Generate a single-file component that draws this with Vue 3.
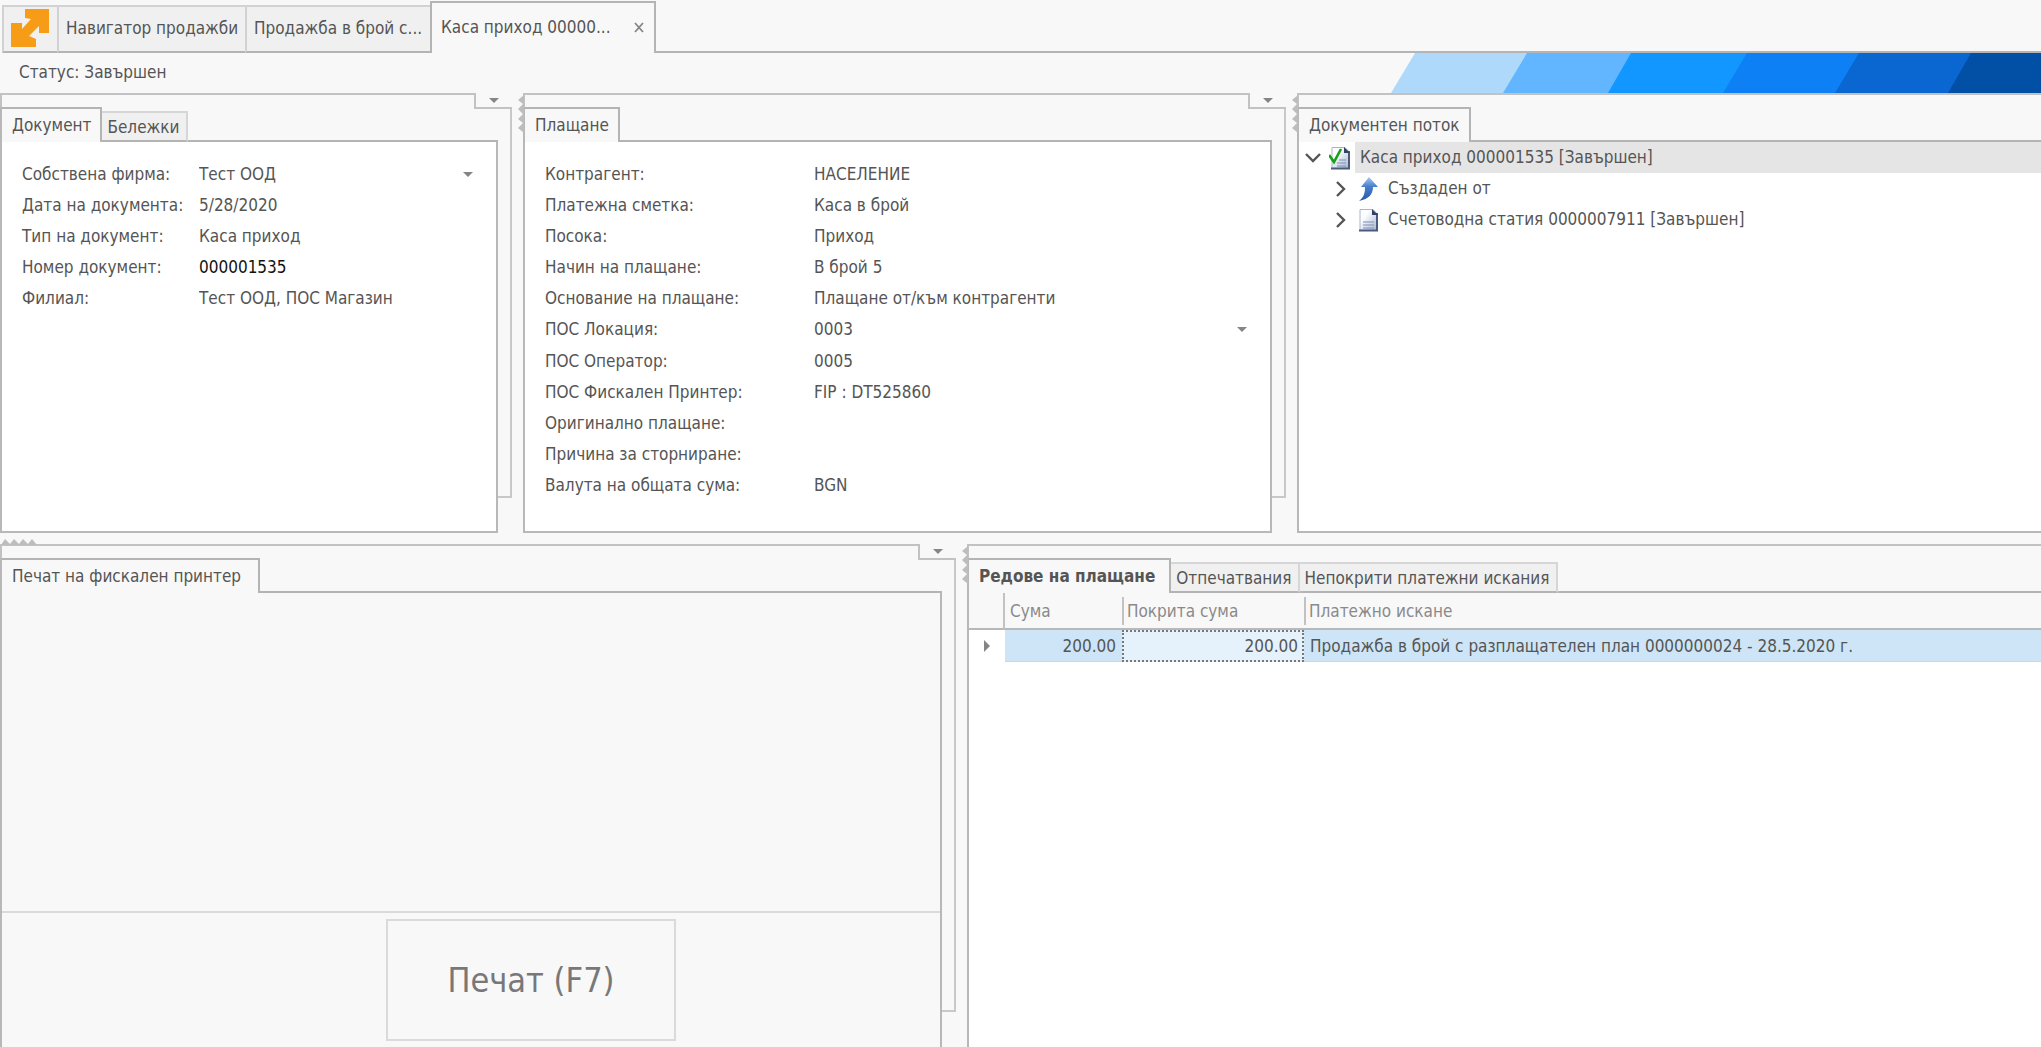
<script setup>
import { ref } from 'vue'

const openTabs = ['Навигатор продажби', 'Продажба в брой с...']

const documentFields = [
  { id: 'firm', label: 'Собствена фирма:', value: 'Тест ООД', select: true },
  { id: 'date', label: 'Дата на документа:', value: '5/28/2020' },
  { id: 'type', label: 'Тип на документ:', value: 'Каса приход' },
  { id: 'number', label: 'Номер документ:', value: '000001535', strong: true },
  { id: 'branch', label: 'Филиал:', value: 'Тест ООД, ПОС Магазин' },
]

const paymentFields = [
  { id: 'party', label: 'Контрагент:', value: 'НАСЕЛЕНИЕ' },
  { id: 'account', label: 'Платежна сметка:', value: 'Каса в брой' },
  { id: 'direction', label: 'Посока:', value: 'Приход' },
  { id: 'method', label: 'Начин на плащане:', value: 'В брой 5' },
  { id: 'reason', label: 'Основание на плащане:', value: 'Плащане от/към контрагенти' },
  { id: 'location', label: 'ПОС Локация:', value: '0003', select: true },
  { id: 'operator', label: 'ПОС Оператор:', value: '0005' },
  { id: 'printer', label: 'ПОС Фискален Принтер:', value: 'FIP : DT525860' },
  { id: 'original', label: 'Оригинално плащане:', value: '' },
  { id: 'storno', label: 'Причина за сторниране:', value: '' },
  { id: 'currency', label: 'Валута на общата сума:', value: 'BGN' },
]

const forms = [
  { key: 'doc', tabs: ['Документ', 'Бележки'], fields: documentFields },
  { key: 'pay', tabs: ['Плащане'], fields: paymentFields },
]

const rows = ref([
  {
    sum: '200.00',
    covered: '200.00',
    request: 'Продажба в брой с разплащателен план 0000000024 - 28.5.2020 г.',
  },
])
</script>

<template>
  <div class="app">
    <nav class="topbar" role="tablist">
      <button class="toptab toptab-logo" aria-label="Меню">
        <svg width="38" height="38" viewBox="0 0 38 38">
          <path fill="#f79c16" d="M14 0H38V24H28V17L18 27L25 30V38H0V14H11V20L20 10L14 9Z" />
        </svg>
      </button>
      <button
        v-for="(tab, i) in openTabs"
        :key="tab"
        class="toptab"
        :class="i === 0 ? 'toptab-first' : 'toptab-second'"
        role="tab"
      >{{ tab }}</button>
      <div class="toptab toptab-active">
        <button class="plain" role="tab" aria-selected="true">Каса приход 00000...</button>
        <button class="plain close" aria-label="Затвори">
          <svg width="10" height="11" viewBox="0 0 10 11">
            <path d="M1 1L9 10M9 1L1 10" stroke="#858585" stroke-width="1.8" fill="none" />
          </svg>
        </button>
      </div>
      <div class="topbar-rest"></div>
    </nav>

    <header class="status">
      <span class="status-text">Статус: Завършен</span>
      <svg class="banner" width="650" height="40" viewBox="0 0 650 40" aria-hidden="true">
        <path fill="#aed9fb" d="M24 0H650V40H0Z" />
        <path fill="#62b6ff" d="M136 0H650V40H112Z" />
        <path fill="#1296ff" d="M240 0H650V40H217Z" />
        <path fill="#0c80f4" d="M356 0H650V40H332Z" />
        <path fill="#0a66d0" d="M468 0H650V40H444Z" />
        <path fill="#024fa6" d="M580 0H650V40H557Z" />
      </svg>
    </header>

    <main class="work">
      <div class="row row-top">
        <section v-for="form in forms" :key="form.key" class="panel">
          <svg v-if="form.key === 'pay'" class="grip" width="6" height="38" viewBox="0 0 6 38">
            <path fill="#bdbdbd" d="M6 0V38L0 33L5 28L0 24L5 19L0 14L5 9L0 5Z" />
          </svg>
          <div class="cap">
            <div class="cap-line"></div>
            <button class="cap-notch" aria-label="Опции">
              <svg width="10" height="5" viewBox="0 0 10 5"><path fill="#858585" d="M0 0H10L5 5Z" /></svg>
            </button>
          </div>
          <div class="mid">
            <div class="content">
              <div class="tabs" role="tablist">
                <button
                  v-for="(tab, i) in form.tabs"
                  :key="tab"
                  class="tab"
                  :class="{ active: i === 0 }"
                  role="tab"
                >{{ tab }}</button>
                <div class="tabs-rest"></div>
              </div>
              <div class="body form" :class="'form-' + form.key">
                <div v-for="f in form.fields" :key="f.id" class="field">
                  <label :for="f.id">{{ f.label }}</label>
                  <div v-if="f.select" class="pick">
                    <select :id="f.id"><option>{{ f.value }}</option></select>
                    <svg class="pick-arrow" width="10" height="5" viewBox="0 0 10 5"><path fill="#858585" d="M0 0H10L5 5Z" /></svg>
                  </div>
                  <input v-else :id="f.id" type="text" readonly :value="f.value" :class="{ strong: f.strong }" />
                </div>
              </div>
            </div>
            <div class="rail"></div>
          </div>
        </section>

        <section class="panel panel-open">
          <svg class="grip" width="6" height="38" viewBox="0 0 6 38">
            <path fill="#bdbdbd" d="M6 0V38L0 33L5 28L0 24L5 19L0 14L5 9L0 5Z" />
          </svg>
          <div class="cap"><div class="cap-line"></div></div>
          <div class="mid">
            <div class="content">
              <div class="tabs" role="tablist">
                <button class="tab active" role="tab">Документен поток</button>
                <div class="tabs-rest"></div>
              </div>
              <ul class="body tree">
                <li class="node">
                  <button class="plain twist" aria-label="Свий">
                    <svg width="16" height="10" viewBox="0 0 16 10"><path d="M1 1L8 8L15 1" stroke="#555" stroke-width="2.4" fill="none" /></svg>
                  </button>
                  <svg class="icon" width="24" height="24" viewBox="0 0 24 24">
                    <defs>
                      <linearGradient id="page" x1="0" y1="0" x2="1" y2="1">
                        <stop offset="0.3" stop-color="#fdfdff" />
                        <stop offset="1" stop-color="#a3b4cf" />
                      </linearGradient>
                    </defs>
                    <path d="M3 1.5H16L20.5 6V22.5H3Z" fill="url(#page)" stroke="#a8b5c9" />
                    <path d="M20 5V22.5H2" fill="none" stroke="#4a5b7b" stroke-width="2" />
                    <path d="M15 1V7H21Z" fill="#33435f" />
                    <path d="M10 14H17M8 17H17M8 20H17" stroke="#7b8fb4" stroke-width="1.2" />
                    <path d="M0 9L5 16L12 3" stroke="#16a016" stroke-width="2.6" fill="none" />
                  </svg>
                  <span class="node-text selected">Каса приход 000001535 [Завършен]</span>
                </li>
                <li class="node child">
                  <button class="plain twist" aria-label="Разгъни">
                    <svg width="10" height="16" viewBox="0 0 10 16"><path d="M1 1L8 8L1 15" stroke="#555" stroke-width="2.4" fill="none" /></svg>
                  </button>
                  <svg class="icon" width="24" height="24" viewBox="0 0 24 24">
                    <defs>
                      <linearGradient id="up" x1="0" y1="0" x2="0" y2="1">
                        <stop offset="0" stop-color="#a9cbef" />
                        <stop offset="0.4" stop-color="#4680cd" />
                        <stop offset="1" stop-color="#2a55a8" />
                      </linearGradient>
                    </defs>
                    <path d="M12 0L21 10H16C16 17 12 22 2 24C7 20 8 16 8 10H4Z" fill="url(#up)" />
                  </svg>
                  <span class="node-text">Създаден от</span>
                </li>
                <li class="node child">
                  <button class="plain twist" aria-label="Разгъни">
                    <svg width="10" height="16" viewBox="0 0 10 16"><path d="M1 1L8 8L1 15" stroke="#555" stroke-width="2.4" fill="none" /></svg>
                  </button>
                  <svg class="icon" width="24" height="24" viewBox="0 0 24 24">
                    <path d="M3 1.5H16L20.5 6V22.5H3Z" fill="url(#page)" stroke="#a8b5c9" />
                    <path d="M20 5V22.5H2" fill="none" stroke="#4a5b7b" stroke-width="2" />
                    <path d="M15 1V7H21Z" fill="#33435f" />
                    <path d="M6 14H17M6 17H17M6 20H17" stroke="#7b8fb4" stroke-width="1.2" />
                  </svg>
                  <span class="node-text">Счетоводна статия 0000007911 [Завършен]</span>
                </li>
              </ul>
            </div>
          </div>
        </section>
      </div>

      <div class="row row-bottom">
        <section class="panel">
          <svg class="grip-flat" width="36" height="6" viewBox="0 0 36 6">
            <path fill="#bdbdbd" d="M0 6L4 0L9 5L13 0L18 5L22 0L27 5L31 0L36 6Z" />
          </svg>
          <div class="cap">
            <div class="cap-line"></div>
            <button class="cap-notch" aria-label="Опции">
              <svg width="10" height="5" viewBox="0 0 10 5"><path fill="#858585" d="M0 0H10L5 5Z" /></svg>
            </button>
          </div>
          <div class="mid">
            <div class="content">
              <div class="tabs" role="tablist">
                <button class="tab active tab-print" role="tab">Печат на фискален принтер</button>
                <div class="tabs-rest"></div>
              </div>
              <div class="body print">
                <div class="print-foot">
                  <button class="print-button">Печат (F7)</button>
                </div>
              </div>
            </div>
            <div class="rail"></div>
          </div>
        </section>

        <section class="panel panel-open">
          <svg class="grip" width="6" height="38" viewBox="0 0 6 38">
            <path fill="#bdbdbd" d="M6 0V38L0 33L5 28L0 24L5 19L0 14L5 9L0 5Z" />
          </svg>
          <div class="cap"><div class="cap-line"></div></div>
          <div class="mid">
            <div class="content">
              <div class="tabs" role="tablist">
                <button class="tab active bold" role="tab">Редове на плащане</button>
                <button class="tab" role="tab">Отпечатвания</button>
                <button class="tab" role="tab">Непокрити платежни искания</button>
                <div class="tabs-rest"></div>
              </div>
              <div class="body">
                <table class="grid">
                  <colgroup>
                    <col class="c-mark" /><col class="c-sum" /><col class="c-cover" /><col />
                  </colgroup>
                  <thead>
                    <tr>
                      <th class="corner"></th>
                      <th><div>Сума</div></th>
                      <th><div class="split">Покрита сума</div></th>
                      <th><div class="split">Платежно искане</div></th>
                    </tr>
                  </thead>
                  <tbody>
                    <tr v-for="r in rows" :key="r.request">
                      <td class="mark">
                        <svg width="6" height="12" viewBox="0 0 6 12"><path fill="#858585" d="M0 0L6 6L0 12Z" /></svg>
                      </td>
                      <td class="num">{{ r.sum }}</td>
                      <td class="num focused">{{ r.covered }}</td>
                      <td>{{ r.request }}</td>
                    </tr>
                  </tbody>
                </table>
              </div>
            </div>
          </div>
        </section>
      </div>
    </main>
  </div>
</template>

<style>
body {
  margin: 0;
  background: #f8f8f8;
}
</style>

<style scoped>
.app,
.app * {
  box-sizing: border-box;
}
.app {
  min-height: 100vh;
  display: flex;
  flex-direction: column;
  overflow: hidden;
  background: #f8f8f8;
  color: #555;
  font: 17px/20px "DejaVu Sans Condensed", "Noto Sans", sans-serif;
}
button,
input,
select {
  margin: 0;
  padding: 0;
  border: 0;
  border-radius: 0;
  background: none;
  color: inherit;
  font: inherit;
}
svg {
  display: block;
  flex: none;
}

/* window tabs */
.topbar {
  display: flex;
  align-items: flex-end;
  height: 53px;
  padding-left: 2px;
  background: #f8f8f8;
}
.toptab {
  height: 48px;
  flex: none;
  padding-bottom: 2px;
  border: 2px solid #d2d2d2;
  border-right: 0;
  border-bottom-color: #b4b4b4;
  background: #f0f0f0;
  text-align: left;
  white-space: nowrap;
}
.toptab-logo {
  width: 55px;
  padding-left: 7px;
}
.toptab-first {
  width: 188px;
  padding-left: 7px;
}
.toptab-second {
  width: 185px;
  padding-left: 7px;
}
.toptab-active {
  display: flex;
  align-items: center;
  justify-content: space-between;
  width: 226px;
  height: 52px;
  padding: 0 10px 2px 9px;
  border: 2px solid #b4b4b4;
  border-bottom: 0;
  background: #f8f8f8;
}
.topbar-rest {
  flex: 1;
  border-bottom: 2px solid #b4b4b4;
}

.status {
  display: flex;
  align-items: center;
  justify-content: space-between;
  height: 40px;
  padding-left: 19px;
}
.status-text {
  padding-bottom: 2px;
}

/* docked panels */
.work {
  flex: 1;
  display: flex;
  flex-direction: column;
  gap: 11px;
}
.row {
  display: grid;
}
.row-top {
  grid-template-columns: 523fr 774fr 744fr;
}
.row-bottom {
  flex: 1;
  grid-template-columns: 967fr 1074fr;
}
.panel {
  position: relative;
  display: flex;
  flex-direction: column;
  min-width: 0;
  padding-right: 11px;
}
.panel-open {
  padding-right: 0;
}
.grip {
  position: absolute;
  top: 2px;
  left: -5px;
}
.grip-flat {
  position: absolute;
  top: -5px;
  left: 1px;
}
.cap {
  display: flex;
  height: 16px;
}
.cap-line {
  flex: 1;
  border: 2px solid #c2c2c2;
  border-bottom: 0;
}
.panel-open .cap-line {
  border-right: 0;
}
.cap-notch {
  display: flex;
  justify-content: center;
  width: 36px;
  padding-top: 5px;
  border-bottom: 2px solid #c2c2c2;
}
.mid {
  flex: 1;
  display: flex;
}
.content {
  flex: 1;
  display: flex;
  flex-direction: column;
  min-width: 0;
  margin-top: -2px;
}
.rail {
  width: 14px;
  margin-bottom: 35px;
  border: 2px solid #c8c8c8;
  border-top: 0;
  border-left: 0;
}
.tabs {
  display: flex;
  align-items: flex-end;
  height: 35px;
  border-left: 2px solid #b8b8b8;
}
.tab {
  height: 31px;
  padding: 0 6px 0 5px;
  border: 2px solid #d6d6d6;
  border-left: 0;
  border-bottom-color: #b4b4b4;
  background: #f0f0f0;
  white-space: nowrap;
}
.tab.active {
  height: 35px;
  padding: 0 9px 2px 10px;
  border-color: #b4b4b4;
  border-bottom: 0;
  background: #f8f8f8;
}
.tab.tab-print {
  padding-right: 17px;
}
.tab.bold {
  padding-right: 14px;
  font-weight: 700;
}
.tabs-rest {
  flex: 1;
  border-bottom: 2px solid #b4b4b4;
}
.body {
  flex: 1;
  border: 2px solid #b8b8b8;
  border-top: 0;
  background: #fff;
}
.row-bottom .body {
  border-bottom: 0;
}
.panel-open .body {
  border-right: 0;
}

/* forms */
.form {
  display: grid;
  grid-auto-rows: 31px;
  padding: 16px 22px 30px 20px;
}
.form-pay {
  grid-auto-rows: minmax(31px, 1fr);
  min-height: 391px;
}
.field {
  display: flex;
  align-items: center;
}
.field label {
  flex: none;
  width: 177px;
}
.form-pay label {
  width: 269px;
}
.field input,
.pick {
  flex: 1;
  min-width: 0;
}
.pick {
  position: relative;
}
.pick select {
  width: 100%;
  appearance: none;
}
.pick-arrow {
  position: absolute;
  top: 8px;
  right: 1px;
  pointer-events: none;
}
.field .strong {
  color: #111;
}

/* document flow */
.tree {
  margin: 0;
  padding: 0;
  list-style: none;
}
.node {
  display: flex;
  align-items: center;
  height: 31px;
  padding-left: 5px;
}
.child {
  padding-left: 33px;
}
.twist {
  display: flex;
  justify-content: center;
  width: 18px;
}
.icon {
  margin-left: 7px;
}
.node-text {
  flex: 1;
  margin-left: 2px;
  padding-left: 5px;
  line-height: 31px;
}
.selected {
  background: #e5e5e5;
}

/* fiscal print */
.print {
  display: flex;
  flex-direction: column;
  justify-content: flex-end;
  background: #f8f8f8;
}
.print-foot {
  display: flex;
  justify-content: center;
  padding: 6px 0 6px 120px;
  border-top: 2px solid #dadada;
}
.print-button {
  width: 290px;
  height: 122px;
  border: 2px solid #dadada;
  color: #787878;
  font-size: 34px;
}

/* payment lines */
.grid {
  width: 100%;
  border-collapse: separate;
  border-spacing: 0;
  table-layout: fixed;
}
.c-mark {
  width: 36px;
}
.c-sum {
  width: 117px;
}
.c-cover {
  width: 182px;
}
.grid th {
  height: 37px;
  padding: 0;
  border-bottom: 2px solid #b8b8b8;
  background: #f8f8f8;
  color: #8a8a8a;
  font-weight: 400;
  text-align: left;
}
.grid th.corner {
  border-right: 2px solid #c2c2c2;
}
.grid th div {
  padding-left: 5px;
  line-height: 28px;
}
.grid th .split {
  padding-left: 3px;
  border-left: 2px solid #c2c2c2;
}
.grid td {
  height: 32px;
  padding: 0 6px;
  border-bottom: 1px solid #d5d5d5;
  background: #cde5f6;
}
.grid td.mark {
  padding-left: 15px;
  border: 0;
  background: #fff;
}
.grid .num {
  text-align: right;
}
.grid td.focused {
  border: 2px dotted #777;
  padding: 0 4px;
  background: #e5f1fb;
}
</style>
